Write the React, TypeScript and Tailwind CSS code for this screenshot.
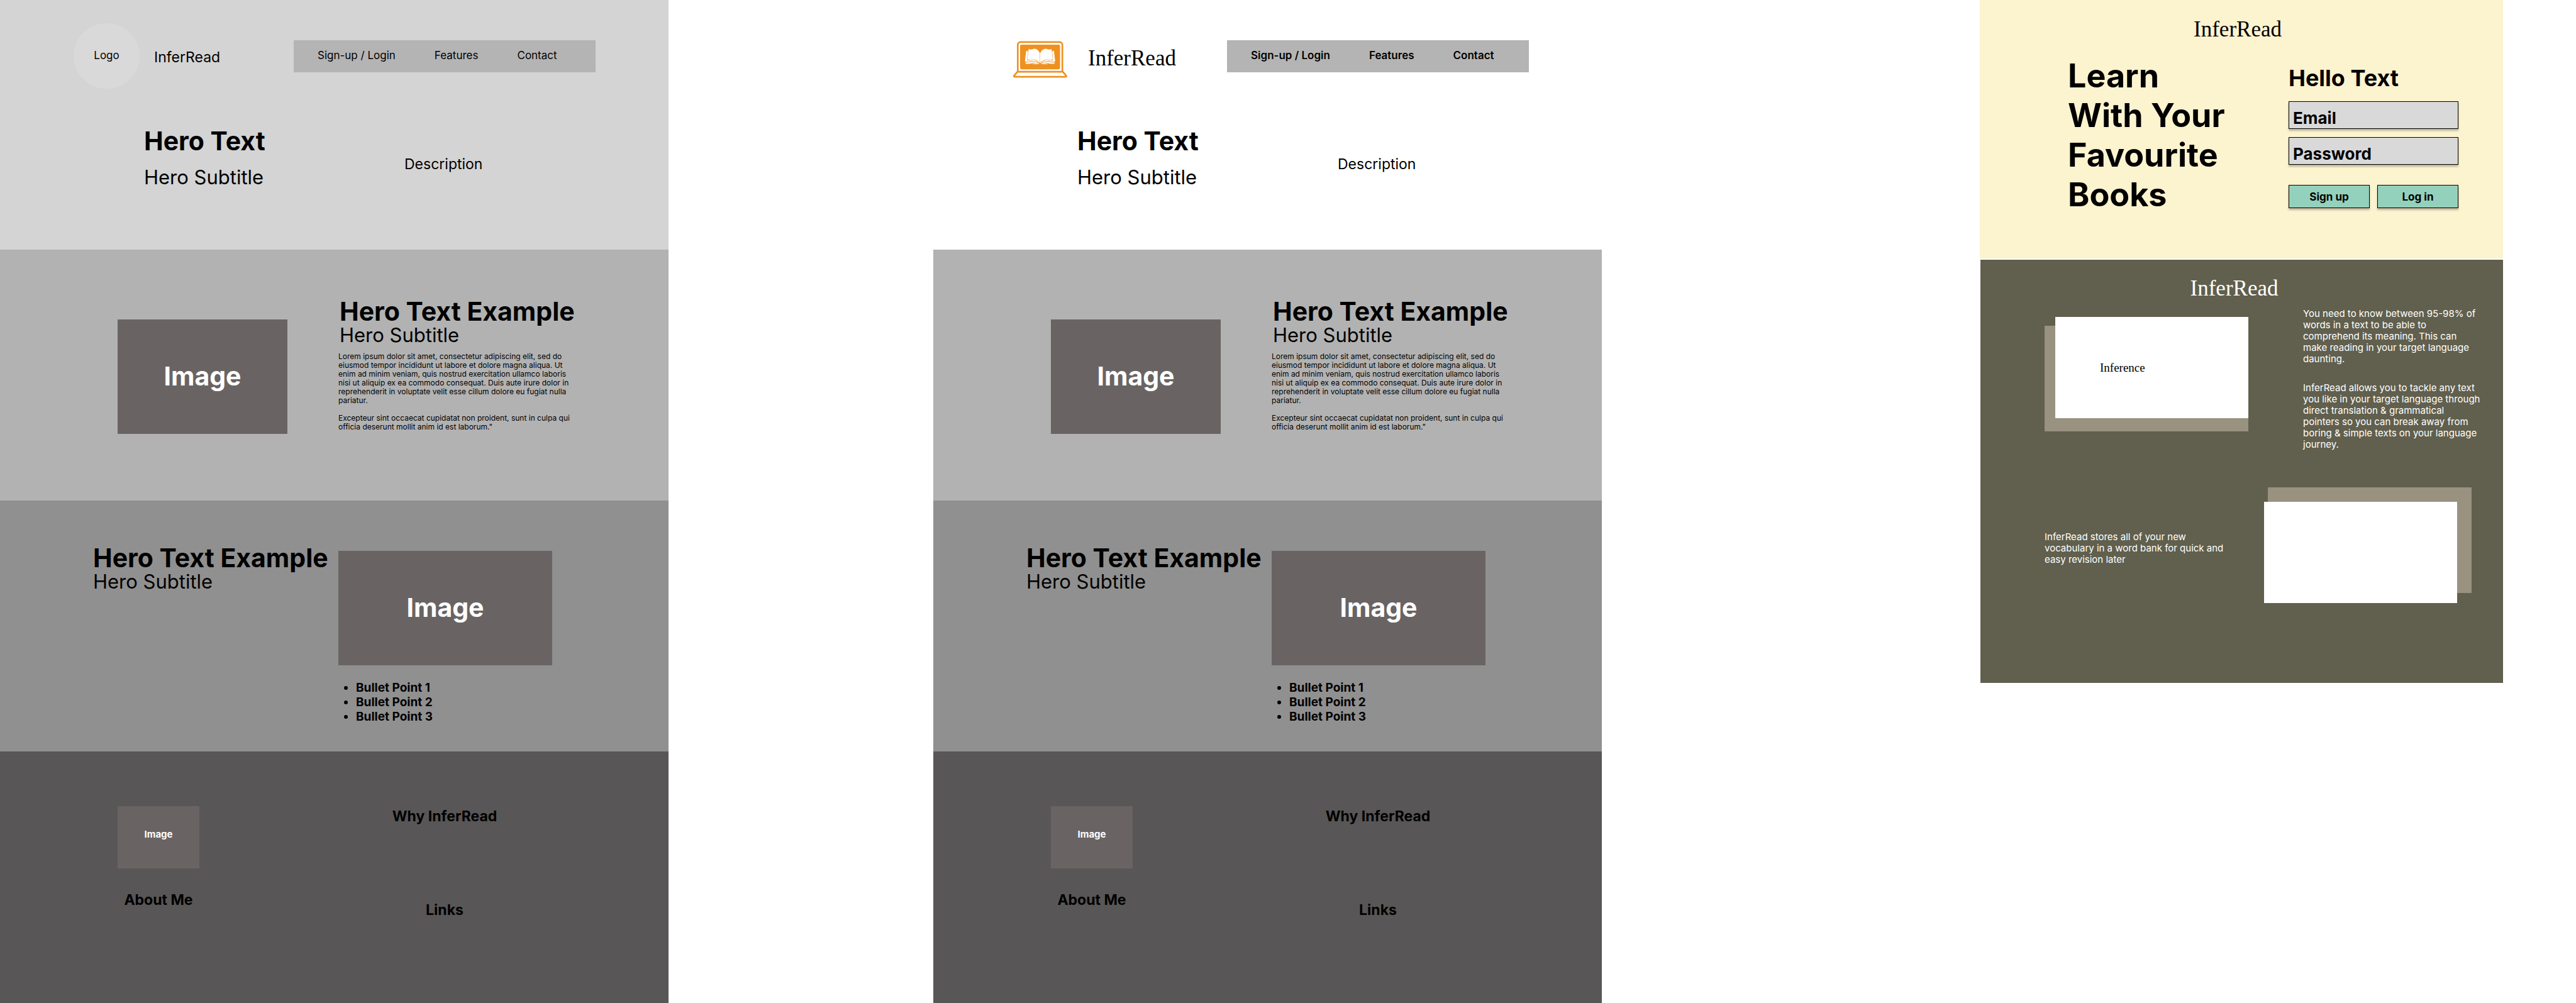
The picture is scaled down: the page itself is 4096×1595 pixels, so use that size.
import type { ReactNode } from "react";

const SANS = "font-['Inter','Liberation_Sans',sans-serif]";
const SERIF = "font-['Liberation_Serif',serif]";

function LaptopLogo() {
  return (
    <svg viewBox="124 112 358 243" className="h-[59px] w-[88px]" role="img" aria-label="InferRead logo">
      <g fill="none" stroke="#ee9120" strokeWidth="11" strokeLinejoin="round">
        <path d="M156 314V138a18 18 0 0 1 18-18H430a18 18 0 0 1 18 18V314" />
        <path d="M154 314H451L473 340Q477 347 468 347H137Q128 347 132 340Z" />
      </g>
      <rect x="171" y="137" width="262" height="161" rx="10" fill="#ee9120" />
      <BookHalf />
      <g transform="translate(604 0) scale(-1 1)">
        <BookHalf />
      </g>
    </svg>
  );
}

function BookHalf() {
  return (
    <g fill="#fff">
      <path d="M211 177L223 181L217 239C240 243 250 234 266 238C282 243 294 252 299 260C284 245 262 243 246 245C232 248 220 251 203 247Z" />
      <path d="M227 165C236 172 248 168 260 164C280 160 296 178 301 194V258C294 248 284 240 270 236C254 231 242 239 219 235Z" />
      <path d="M207 252C230 256 246 247 262 248C278 250 291 256 298 263C284 256 268 253 254 257C238 262 222 263 207 261Z" />
      <path d="M252 262C266 256 284 258 296 264H252Z" />
    </g>
  );
}

function NavBar({ bold }: { bold?: boolean }) {
  return (
    <nav
      className={`mr-[116px] ml-auto flex h-[51px] w-[480px] items-center gap-[62px] bg-[#b4b4b4] pl-[38px] text-[17px] whitespace-nowrap ${
        bold ? "font-semibold" : "font-normal"
      }`}
    >
      <a href="#signup">Sign-up / Login</a>
      <a href="#features">Features</a>
      <a href="#contact">Contact</a>
    </nav>
  );
}

function Placeholder({ className }: { className: string }) {
  return (
    <div className={`flex items-center justify-center bg-[#696463] font-bold text-white ${className}`}>Image</div>
  );
}

function Titles({ title, gap }: { title: string; gap?: boolean }) {
  return (
    <div className="whitespace-nowrap">
      <h2 className="text-[41px] leading-[44px] font-bold">{title}</h2>
      <p className={`text-[31px] leading-8 ${gap ? "mt-5" : ""}`}>Hero Subtitle</p>
    </div>
  );
}

function Wireframe({ logo, name, top, boldNav }: { logo: ReactNode; name: ReactNode; top: string; boldNav?: boolean }) {
  return (
    <article>
      <section className={`min-h-[397px] pt-[37px] ${top}`}>
        <header className="flex items-center pl-[117px]">
          {logo}
          {name}
          <NavBar bold={boldNav} />
        </header>
        <div className="mt-[61px] grid grid-cols-[643fr_420fr]">
          <div className="pl-[229px]">
            <Titles title="Hero Text" gap />
          </div>
          <p className="mt-[43px] text-[23px] leading-8">Description</p>
        </div>
      </section>

      <section className="grid min-h-[399px] grid-cols-[538fr_525fr] bg-[#b2b2b2]">
        <div className="pt-[111px] pl-[187px]">
          <Placeholder className="h-[182px] w-[270px] text-[41px]" />
        </div>
        <div className="pt-[76px]">
          <div className="pl-0.5">
            <Titles title="Hero Text Example" />
          </div>
          <div className="mt-[11px] w-[370px] text-xs leading-[14px]">
            <p>
              Lorem ipsum dolor sit amet, consectetur adipiscing elit, sed do eiusmod tempor incididunt ut labore et
              dolore magna aliqua. Ut enim ad minim veniam, quis nostrud exercitation ullamco laboris nisi ut aliquip
              ex ea commodo consequat. Duis aute irure dolor in reprehenderit in voluptate velit esse cillum dolore eu
              fugiat nulla pariatur.
            </p>
            <p className="mt-[14px]">
              Excepteur sint occaecat cupidatat non proident, sunt in culpa qui officia deserunt mollit anim id est
              laborum."
            </p>
          </div>
        </div>
      </section>

      <section className="grid min-h-[399px] grid-cols-[538fr_525fr] bg-[#909090]">
        <div className="pt-[69px] pl-[148px]">
          <Titles title="Hero Text Example" />
        </div>
        <div className="pt-20">
          <Placeholder className="h-[182px] w-[340px] text-[41px]" />
          <ul className="mt-6 list-disc pl-7 text-[19px] leading-[23px] font-bold">
            <li>Bullet Point 1</li>
            <li>Bullet Point 2</li>
            <li>Bullet Point 3</li>
          </ul>
        </div>
      </section>

      <section className="grid min-h-[400px] grid-cols-[538fr_525fr] bg-[#585656] pt-[87px] text-[23px] leading-8 font-bold">
        <div className="ml-[187px] flex w-[130px] flex-col items-center gap-[34px]">
          <Placeholder className="h-[99px] w-full pb-[10px] text-[15px]" />
          <h3 className="whitespace-nowrap">About Me</h3>
        </div>
        <div className="flex w-[338px] flex-col items-center gap-[117px]">
          <h3>Why InferRead</h3>
          <h3>Links</h3>
        </div>
      </section>
    </article>
  );
}

function Field({ label, type }: { label: string; type: string }) {
  return (
    <input
      type={type}
      aria-label={label}
      placeholder={label}
      className="block h-11 w-full border border-black bg-[#d9d9d9] px-1.5 pt-2 text-[26px] leading-8 font-bold shadow-[0_3px_3px_rgba(0,0,0,0.25)] placeholder:text-black placeholder:opacity-100"
    />
  );
}

function ActionButton({ children }: { children: ReactNode }) {
  return (
    <button
      type="button"
      className="h-[37px] flex-1 border border-black bg-[#94d1bc] text-[17px] leading-6 font-bold shadow-[0_3px_3px_rgba(0,0,0,0.25)]"
    >
      {children}
    </button>
  );
}

function LandingPage() {
  return (
    <article>
      <section className="min-h-[411px] bg-[#fcf3cf] pt-[27px]">
        <h1 className={`pr-3 text-center text-[35px] leading-10 ${SERIF}`}>InferRead</h1>
        <div className="mt-[22px] grid grid-cols-[491fr_341fr]">
          <h2 className="pl-[140px] text-[52px] leading-[63px] font-bold whitespace-nowrap">
            Learn
            <br />
            With Your
            <br />
            Favourite
            <br />
            Books
          </h2>
          <form className="w-[270px] pt-[13px]">
            <h3 className="text-[36px] leading-[44px] font-bold">Hello Text</h3>
            <div className="mt-[15px] flex flex-col gap-[13px]">
              <Field label="Email" type="email" />
              <Field label="Password" type="password" />
            </div>
            <div className="mt-8 flex gap-3">
              <ActionButton>Sign up</ActionButton>
              <ActionButton>Log in</ActionButton>
            </div>
          </form>
        </div>
      </section>

      <section className="mt-0.5 ml-px bg-[#615f4d] pt-[26px] pb-[127px] text-[15px] leading-[18px] text-white">
        <h2 className={`pr-6 text-center text-[35px] leading-10 ${SERIF}`}>InferRead</h2>
        <div className="grid grid-cols-[513fr_318fr] pt-[11px]">
          <div className="pt-[14px] pl-[102px]">
            <div className="relative w-[324px] pb-[21px] pl-[17px]">
              <div className="absolute inset-x-0 top-[14px] bottom-0 bg-[#999280]" />
              <div
                className={`relative flex h-[161px] items-center bg-white pl-[71px] text-[19px] text-black ${SERIF}`}
              >
                Inference
              </div>
            </div>
          </div>
          <div className="w-[284px]">
            <p>
              You need to know between 95-98% of words in a text to be able to comprehend its meaning. This can make
              reading in your target language daunting.
            </p>
            <p className="mt-7">
              InferRead allows you to tackle any text you like in your target language through direct translation &amp;
              grammatical pointers so you can break away from boring &amp; simple texts on your language journey.
            </p>
          </div>
        </div>
        <div className="grid grid-cols-[451fr_380fr] pt-[59px]">
          <div className="pt-[70px] pl-[102px]">
            <p className="w-[300px]">
              InferRead stores all of your new vocabulary in a word bank for quick and easy revision later
            </p>
          </div>
          <div className="relative w-[330px] pt-[23px] pr-[23px]">
            <div className="absolute top-0 right-0 bottom-4 left-1.5 bg-[#999280]" />
            <div className="relative h-[161px] bg-white" />
          </div>
        </div>
      </section>
    </article>
  );
}

export default function App() {
  return (
    <main
      className={`grid min-h-screen grid-cols-[1063fr_421fr_1063fr_601fr_832fr_116fr] items-start bg-white text-black ${SANS}`}
    >
      <Wireframe
        top="bg-[#d4d4d4]"
        logo={
          <div className="flex h-[104px] w-[105px] items-center justify-center rounded-full bg-[#d9d9d9] text-[17px]">
            Logo
          </div>
        }
        name={<h1 className="ml-[23px] pt-1 text-[23px] leading-8">InferRead</h1>}
      />
      <div />
      <Wireframe
        boldNav
        top="bg-white"
        logo={
          <div className="flex h-[104px] w-[105px] items-center justify-center pt-[11px]">
            <LaptopLogo />
          </div>
        }
        name={<h1 className={`ml-6 pt-2 text-[35px] leading-10 ${SERIF}`}>InferRead</h1>}
      />
      <div />
      <LandingPage />
    </main>
  );
}
